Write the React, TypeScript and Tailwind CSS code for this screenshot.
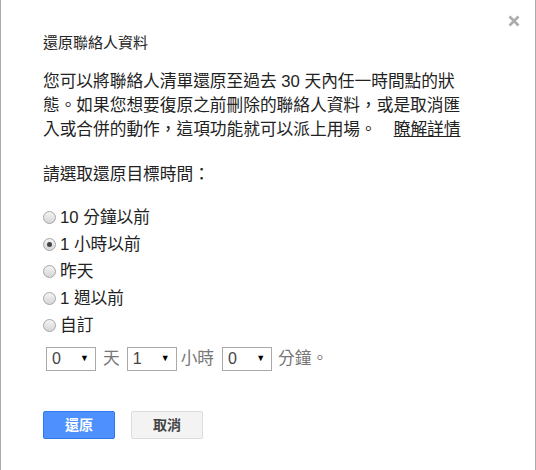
const options = [
  { label: "10 分鐘以前", checked: false },
  { label: "1 小時以前", checked: true },
  { label: "昨天", checked: false },
  { label: "1 週以前", checked: false },
  { label: "自訂", checked: false },
]

const font = { fontFamily: '"Liberation Sans", "Noto Sans CJK TC", sans-serif' }

function Radio({ checked }: { checked: boolean }) {
  return (
    <span className="flex h-[13px] w-[13px] shrink-0 items-center justify-center rounded-full border border-[#a6a6a6] bg-gradient-to-b from-[#f4f4f4] to-[#d6d6d6]">
      {checked && <span className="h-[5px] w-[5px] rounded-full bg-[#444]" />}
    </span>
  )
}

function FakeSelect({ value }: { value: string }) {
  return (
    <div className="flex h-[24px] w-[50px] items-center justify-between border border-[#a9a9a9] bg-white pl-[5px] pr-[6px] text-[16px] text-[#444]">
      <span>{value}</span>
      <span className="text-[9px] text-black">▼</span>
    </div>
  )
}

export default function App() {
  return (
    <div style={font} className="relative h-[470px] w-[536px] border-x border-[#acacac] bg-white pl-[42px] text-[#222]">
      {/* Close button */}
      <button className="absolute right-[15px] top-[15px] flex h-[12px] w-[12px] items-center justify-center" aria-label="關閉">
        <svg width="12" height="12" viewBox="0 0 12 12">
          <path d="M1.5 1.5 L10.5 10.5 M10.5 1.5 L1.5 10.5" stroke="#acacac" strokeWidth="2.6" />
        </svg>
      </button>

      <h2 className="pt-[33px] text-[15px] leading-[20px]">還原聯絡人資料</h2>

      <p className="mt-[17px] text-[16.7px] leading-[24px]">
        您可以將聯絡人清單還原至過去 30 天內任一時間點的狀
        <br />
        態。如果您想要復原之前刪除的聯絡人資料，或是取消匯
        <br />
        入或合併的動作，這項功能就可以派上用場。
        <a className="ml-[17px] text-[#222] underline">瞭解詳情</a>
      </p>

      <p className="mt-[21px] text-[16.7px] leading-[24px]">請選取還原目標時間：</p>

      <div className="mt-[17px] flex flex-col">
        {options.map((opt) => (
          <label key={opt.label} className="flex h-[27px] items-center gap-[4px] text-[16.7px]">
            <Radio checked={opt.checked} />
            <span>{opt.label}</span>
          </label>
        ))}
      </div>

      <div className="mt-[7px] flex items-center pl-[3px] text-[16.7px] text-[#777]">
        <FakeSelect value="0" />
        <span className="ml-[7px] mr-[7px]">天</span>
        <FakeSelect value="1" />
        <span className="ml-[4px] mr-[8px]">小時</span>
        <FakeSelect value="0" />
        <span className="ml-[6px]">分鐘。</span>
      </div>

      <div className="mt-[40px] flex gap-[16px]">
        <button className="h-[28px] w-[72px] rounded-[2px] border border-[#3079ed] bg-[#4d90fe] text-[14px] font-bold text-white">
          還原
        </button>
        <button className="h-[28px] w-[72px] rounded-[2px] border border-[#dcdcdc] bg-[#f3f3f3] text-[14px] font-bold text-[#444]">
          取消
        </button>
      </div>
    </div>
  )
}
